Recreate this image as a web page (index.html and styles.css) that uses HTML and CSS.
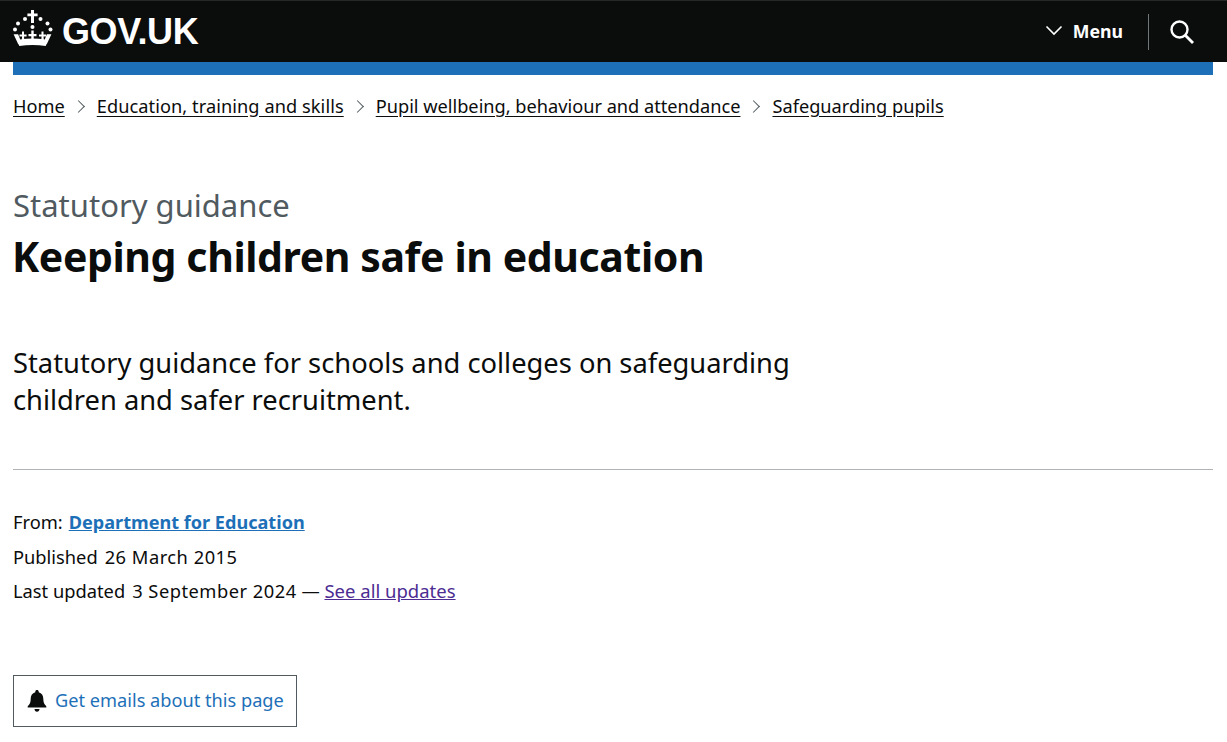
FILE: index.html
```html
<!DOCTYPE html>
<html lang="en">
<head>
<meta charset="utf-8">
<title>Keeping children safe in education - GOV.UK</title>
<link rel="stylesheet" href="styles.css">
</head>
<body>
<header class="site-header">
  <div class="header-bar">
    <a class="logo" href="#">
      <svg class="crown" viewBox="0 0 42 40" width="42" height="40" aria-hidden="true">
        <g fill="#fff">
          <path d="M18 0h3v3.400h3.600v2.800H21V13h-3V6.200h-3.600V3.400H18z"/>
          <circle cx="12" cy="9" r="2"/><circle cx="27.500" cy="9" r="2"/>
          <circle cx="5" cy="13.500" r="2"/><circle cx="34.500" cy="13.500" r="2"/>
          <circle cx="2" cy="19.500" r="2"/><circle cx="37.500" cy="19.500" r="2"/>
          <circle cx="19.500" cy="17" r="2"/>
          <path d="M18.300 20.500h2.400v3.500h2.800v2.200h-2.800v4h-2.400v-4h-2.800V24h2.800z"/>
          <path d="M9 21.500h2v3h2.600v2.100H11l.4 3.900H8.700l.4-3.900H6.500v-2.100H9z"/>
          <path d="M28.500 21.500h2v3h2.600v2.100h-2.600l.4 3.900h-2.700l.4-3.900H26v-2.100h2.500z"/>
          <path d="M.6 24.200h4.500l2.200 5.300c3.800-.6 7.800-.9 12.200-.9s8.400.3 12.200.9l2.200-5.300h4.500l-4.300 9.200c-.7.700-1.200 1.600-1.400 2.600-4.300-.6-8.700-.9-13.200-.9s-8.900.3-13.200.9c-.2-1-.7-1.900-1.400-2.600z"/>
        </g>
      </svg>
      <span class="logo-text">GOV.UK</span>
    </a>
    <nav class="header-nav">
      <a class="menu" href="#">
        <svg class="chev" viewBox="0 0 18 12" width="18" height="12" aria-hidden="true"><path d="M1.500 1.500l7.500 7.500 7.500-7.500" fill="none" stroke="#fff" stroke-width="1.600"/></svg>
        <span>Menu</span>
      </a>
      <span class="divider"></span>
      <a class="search" href="#" aria-label="Search">
        <svg viewBox="0 0 26 26" width="26" height="26" aria-hidden="true"><circle cx="10.500" cy="10.500" r="8" fill="none" stroke="#fff" stroke-width="2.400"/><path d="M16 16l8 8" stroke="#fff" stroke-width="2.800" fill="none"/></svg>
      </a>
    </nav>
  </div>
  <div class="blue-bar"></div>
</header>
<main class="page">
  <ol class="breadcrumbs">
    <li><a href="#">Home</a></li>
    <li class="crumb-wide"><a href="#">Education, training and skills</a></li>
    <li><a href="#">Pupil wellbeing, behaviour and attendance</a></li>
    <li><a href="#">Safeguarding pupils</a></li>
  </ol>
  <p class="caption">Statutory guidance</p>
  <h1 class="title">Keeping children safe in education</h1>
  <p class="lead">Statutory guidance for schools and colleges on safeguarding children and safer recruitment.</p>
  <hr class="rule">
  <dl class="meta">
    <div class="meta-row meta-from"><dt>From:</dt><dd><a class="org" href="#">Department for Education</a></dd></div>
    <div class="meta-row"><dt>Published</dt><dd><span class="date">26 March 2015</span></dd></div>
    <div class="meta-row"><dt>Last updated</dt><dd><span class="date">3 September 2024</span> — <a class="visited" href="#">See all updates</a></dd></div>
  </dl>
  <a class="signup" href="#">
    <svg class="bell" viewBox="0 0 20 22" width="20" height="22" aria-hidden="true"><path fill="#0b0c0c" d="M10 0c1 0 1.700.7 1.700 1.700v.6c3 .8 4.600 3.300 4.600 6.500 0 3.700 1 5.600 3 7.500v1.200H.7v-1.200c2-1.900 3-3.800 3-7.500 0-3.200 1.600-5.700 4.600-6.500v-.6C8.300.7 9 0 10 0zM7.500 19h5c0 1.500-1.100 2.700-2.500 2.700S7.500 20.500 7.500 19z"/></svg>
    <span class="signup-text">Get emails about this page</span>
  </a>
</main>
</body>
</html>
```
FILE: styles.css
```css
* { box-sizing: border-box; }
html, body { margin: 0; padding: 0; }
body {
  background: #fff;
  color: #0b0c0c;
  font-family: "Noto Sans", "Liberation Sans", sans-serif;
}
a { color: inherit; }
.site-header { background: linear-gradient(#0b0c0c 62px, #fff 62px); }
.header-bar {
  height: 62px;
  background: #0b0c0c;
  border-top: 1px solid #262727;
  display: flex;
  align-items: center;
  justify-content: space-between;
  padding: 0 33px 0 13px;
}
.logo { display: flex; align-items: center; gap: 7px; color: #fff; text-decoration: none; }
.crown { display: block; margin-bottom: 3px; }
.logo-text { font-family: "Liberation Sans", sans-serif; font-size: 36px; font-weight: 700; line-height: 1; letter-spacing: -0.4px; }
.header-nav { display: flex; align-items: center; }
.menu { display: flex; align-items: center; gap: 10px; color: #fff; text-decoration: none; font-size: 17.700px; font-weight: 700; padding-bottom: 2px; }
.chev { margin-left: 1px; }
.divider { width: 1px; height: 36px; background: #6f777b; margin: 0 20px 0 25px; }
.search { display: block; height: 26px; margin-right: -1px; }
.search svg { display: block; }
.blue-bar { height: 13px; margin: 0 14px 0 13px; background: #1d70b8; }
.page { padding: 0 14px 0 13px; }
.breadcrumbs { list-style: none; margin: 0; padding: 19px 0 0; display: flex; font-size: 18.200px; line-height: 24px; }
.breadcrumbs li { display: flex; align-items: center; }
.breadcrumbs li + li::before {
  content: "";
  width: 8px; height: 8px;
  border-top: 1px solid #505a5f;
  border-right: 1px solid #505a5f;
  transform: rotate(45deg);
  margin: 0 14px 0 9px;
}
.breadcrumbs a { text-underline-offset: 3px; }
.crumb-wide a { letter-spacing: 0.07px; }
.caption { margin: 67px 0 0; font-size: 31px; line-height: 40px; color: #505a5f; }
.title { margin: 7px 0 0 -1px; font-size: 41px; line-height: 48px; font-weight: 700; letter-spacing: -0.4px; }
.lead { margin: 64px 0 0; font-size: 27.300px; line-height: 37px; max-width: 800px; }
.rule { margin: 51px 0 0; border: 0; border-top: 1px solid #b1b4b6; }
.meta { margin: 35px 0 0; font-size: 18.300px; line-height: 34.500px; }
.meta-row { display: flex; gap: 7px; }
.meta-from { gap: 6px; }
.meta dt, .meta dd { margin: 0; }
.date { letter-spacing: 0.5px; }
.org { color: #1d70b8; font-weight: 700; font-size: 18.100px; }
.visited { color: #4c2c92; font-size: 18.500px; }
.signup {
  display: inline-flex;
  align-items: center;
  gap: 8px;
  margin-top: 66px;
  height: 52px;
  padding: 0 12px 0 13px;
  border: 1px solid #505a5f;
  color: #1d70b8;
  text-decoration: none;
  font-size: 18.200px;
}
.signup-text { padding-bottom: 2px; }
```
